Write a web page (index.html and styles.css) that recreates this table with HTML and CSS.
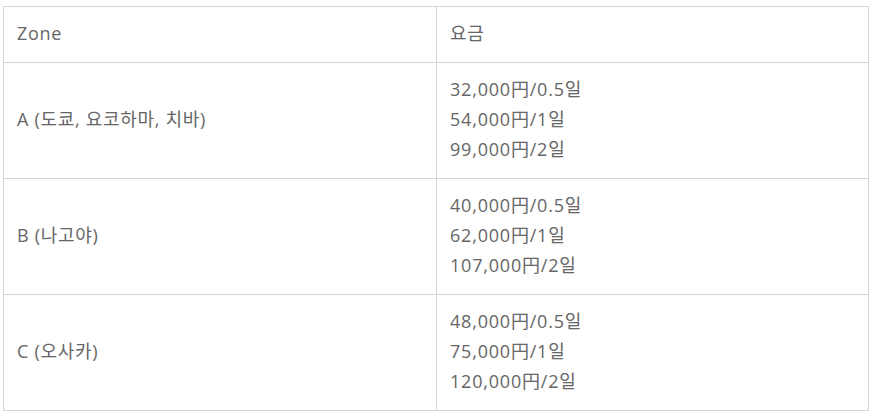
FILE: index.html
```html
<!DOCTYPE html>
<html lang="ko">
<head>
<meta charset="utf-8">
<link rel="stylesheet" href="styles.css">
</head>
<body>
<table class="fare-table">
  <thead>
    <tr><th>Zone</th><th>요금</th></tr>
  </thead>
  <tbody>
    <tr><td>A (도쿄, 요코하마, 치바)</td><td class="price">32,000円/0.5일<br>54,000円/1일<br>99,000円/2일</td></tr>
    <tr><td>B (나고야)</td><td class="price">40,000円/0.5일<br>62,000円/1일<br>107,000円/2일</td></tr>
    <tr><td>C (오사카)</td><td class="price">48,000円/0.5일<br>75,000円/1일<br>120,000円/2일</td></tr>
  </tbody>
</table>
</body>
</html>
```
FILE: styles.css
```css
html, body { margin: 0; padding: 0; background: #fff; }
body { padding: 6px 3px; }
.fare-table {
  width: 866px;
  border-collapse: collapse;
  font-family: "Open Sans", "Noto Sans CJK KR", sans-serif;
  font-size: 18px;
  letter-spacing: 0.7px;
  color: #666;
}
.fare-table th, .fare-table td {
  border: 1px solid #d4d4d4;
  padding: 11px 13px 14px;
  line-height: 30px;
  text-align: left;
  font-weight: normal;
  vertical-align: middle;
}
.fare-table .price { letter-spacing: 0.8px; }
.fare-table th:first-child, .fare-table td:first-child { width: 406px; }
```
